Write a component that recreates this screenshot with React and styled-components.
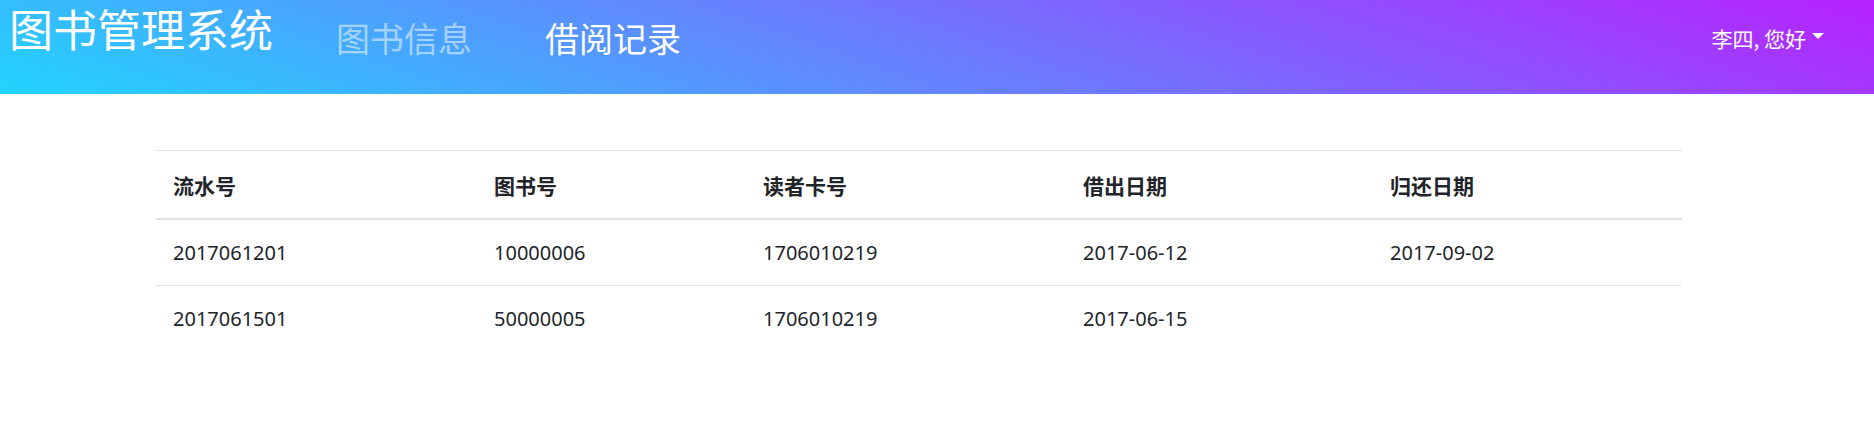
import React from 'react';
import styled, {createGlobalStyle} from 'styled-components';

const GlobalStyle = createGlobalStyle`
  * {
    box-sizing: border-box;
  }
  body {
    margin: 0;
    background: #fff;
    color: #212529;
    font-family: "Noto Sans", "Noto Sans CJK SC", sans-serif;
  }
`;

const NavBar = styled.nav`
  height: 94px;
  display: flex;
  align-items: flex-start;
  padding: 0 50px 0 9px;
  background-color: #21d4fd;
  background-image: linear-gradient(19deg, #21d4fd 0%, #b721ff 100%);
  color: #fff;
`;

const Brand = styled.a`
  font-family: "Noto Sans CJK SC", sans-serif;
  font-size: 44px;
  line-height: 56px;
  margin-right: 63px;
  color: #fff;
  text-decoration: none;
  white-space: nowrap;
`;

const NavLinks = styled.div`
  display: flex;
  gap: 73px;
  padding-top: 12px;
`;

const NavLink = styled.a`
  font-family: "Noto Sans CJK SC", sans-serif;
  font-size: 34px;
  line-height: 51px;
  color: ${props => props.active ? "#fff" : "rgba(255, 255, 255, 0.5)"};
  text-decoration: none;
  cursor: pointer;
`;

const UserMenu = styled.div`
  margin-left: auto;
  padding-top: 22px;
  display: flex;
  align-items: center;
  font-family: "Noto Sans CJK SC", sans-serif;
  font-size: 21px;
  line-height: 32px;
  cursor: pointer;
`;

const Caret = styled.span`
  display: inline-block;
  margin-left: 6px;
  margin-top: -4px;
  border-top: 6px solid #fff;
  border-left: 6px solid transparent;
  border-right: 6px solid transparent;
`;

const Main = styled.main`
  padding: 56px 192px 0 156px;
`;

const Table = styled.table`
  width: 1526px;
  border-collapse: collapse;
  table-layout: fixed;
  font-size: 20px;
  line-height: 30px;
`;

const Th = styled.th`
  text-align: left;
  font-family: "Noto Sans CJK SC", sans-serif;
  font-weight: 700;
  font-size: 21px;
  padding: 19px 17px 18px;
  border-top: 1px solid #dee2e6;
  border-bottom: 2px solid #dee2e6;
`;

const Td = styled.td`
  padding: 18px 17px 17px;
  border-top: ${props => props.first ? "none" : "1px solid #dee2e6"};
  font-family: "Noto Sans", "Noto Sans CJK SC", sans-serif;
`;

const columns = [
    {title: "流水号", width: 321},
    {title: "图书号", width: 269},
    {title: "读者卡号", width: 320},
    {title: "借出日期", width: 307},
    {title: "归还日期", width: 309},
];

const records = [
    ["2017061201", "10000006", "1706010219", "2017-06-12", "2017-09-02"],
    ["2017061501", "50000005", "1706010219", "2017-06-15", ""],
];

const App = () => {
    return (
        <>
            <GlobalStyle/>
            <NavBar>
                <Brand>图书管理系统</Brand>
                <NavLinks>
                    <NavLink>图书信息</NavLink>
                    <NavLink active>借阅记录</NavLink>
                </NavLinks>
                <UserMenu>
                    李四, 您好
                    <Caret/>
                </UserMenu>
            </NavBar>
            <Main>
                <Table>
                    <colgroup>
                        {columns.map(c => <col key={c.title} style={{width: c.width}}/>)}
                    </colgroup>
                    <thead>
                    <tr>
                        {columns.map(c => <Th key={c.title}>{c.title}</Th>)}
                    </tr>
                    </thead>
                    <tbody>
                    {records.map((row, i) => (
                        <tr key={row[0]}>
                            {row.map((cell, j) => <Td key={j} first={i === 0}>{cell}</Td>)}
                        </tr>
                    ))}
                    </tbody>
                </Table>
            </Main>
        </>
    );
};

export default App;
